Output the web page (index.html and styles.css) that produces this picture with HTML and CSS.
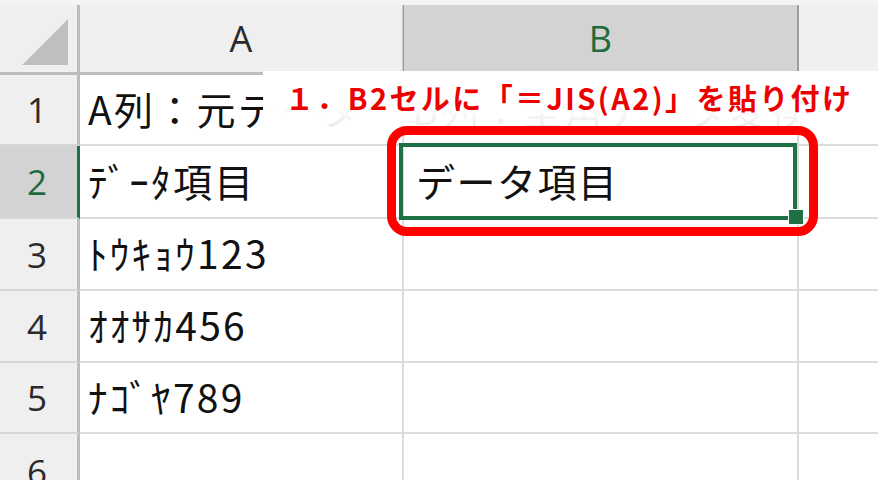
FILE: index.html
```html
<!DOCTYPE html>
<html lang="ja">
<head>
<meta charset="utf-8">
<link rel="stylesheet" href="styles.css">
</head>
<body>
<div class="sheet">
  <div class="grid">
    <div class="strip"></div>
    <div class="edge"></div>

    <div class="corner"><span class="tri"></span></div>
    <div class="colhead">A</div>
    <div class="colhead sel">B</div>
    <div class="colhead c"></div>
    <div class="edge"></div>

    <div class="rowhead">1</div>
    <div class="cell">A列：元データ</div>
    <div class="cell">B列：全角データ変換後</div>
    <div class="cell c"></div>
    <div class="edge"></div>

    <div class="rowhead sel">2</div>
    <div class="cell">ﾃﾞｰﾀ項目</div>
    <div class="cell active">データ項目<span class="handle"></span></div>
    <div class="cell c"></div>
    <div class="edge"></div>

    <div class="rowhead">3</div>
    <div class="cell">ﾄｳｷｮｳ123</div>
    <div class="cell"></div>
    <div class="cell c"></div>
    <div class="edge"></div>

    <div class="rowhead">4</div>
    <div class="cell">ｵｵｻｶ456</div>
    <div class="cell"></div>
    <div class="cell c"></div>
    <div class="edge"></div>

    <div class="rowhead">5</div>
    <div class="cell">ﾅｺﾞﾔ789</div>
    <div class="cell"></div>
    <div class="cell c"></div>
    <div class="edge"></div>

    <div class="rowhead last">6</div>
    <div class="cell"></div>
    <div class="cell"></div>
    <div class="cell c"></div>
    <div class="edge"></div>
  </div>
  <div class="callout">１．B2セルに「＝JIS(A2)」を貼り付け</div>
  <div class="redbox"></div>
</div>
</body>
</html>
```

FILE: styles.css
```css
html, body {
  margin: 0;
  padding: 0;
  background: #fff;
  overflow: hidden;
}

.sheet {
  position: relative;
  width: 886px;
  height: 480px;
  overflow: hidden;
}

.grid {
  display: grid;
  grid-template-columns: 80px 324px 395px 79px 8px;
  grid-template-rows: 5px 70px 71px 73px 72px 72px 71px 60px;
}

.strip {
  grid-column: 1 / 5;
  background: #f4f4f4;
}

.edge {
  background: #fff;
}

.corner {
  background: #efefef;
  border-right: 3px solid #bdbdbd;
  border-bottom: 3px solid #bdbdbd;
  box-sizing: border-box;
  position: relative;
}

.tri {
  position: absolute;
  left: 22px;
  top: 14px;
  width: 0;
  height: 0;
  border-left: 46px solid transparent;
  border-bottom: 46px solid #bfbfbf;
}

.colhead {
  background: #efefef;
  border-right: 2px solid #c8c8c8;
  border-bottom: 3px solid #bdbdbd;
  box-sizing: border-box;
  display: flex;
  align-items: center;
  justify-content: center;
  font-family: "Open Sans", "Noto Sans", sans-serif;
  font-size: 36px;
  color: #2a2a2a;
}

.colhead.sel {
  background: #d3d3d3;
  color: #1e6b40;
  border-left: 1px solid #9e9e9e;
  border-right: 2px solid #9e9e9e;
  margin-left: -1px;
}

.colhead.c {
  border-right: none;
  background: #f0f0f0;
}

.rowhead {
  background: #efefef;
  border-right: 3px solid #bdbdbd;
  border-bottom: 2px solid #d6d6d6;
  box-sizing: border-box;
  display: flex;
  align-items: center;
  justify-content: center;
  padding-right: 3px;
  font-family: "Open Sans", "Noto Sans", sans-serif;
  font-size: 35px;
  color: #2a2a2a;
}

.rowhead.sel {
  background: #d3d3d3;
  color: #1e6b40;
  border-right-color: #1e7145;
}

.rowhead.last {
  align-items: flex-start;
  padding-top: 14px;
}

.cell {
  border-right: 2px solid #dcdcdc;
  border-bottom: 2px solid #dcdcdc;
  box-sizing: border-box;
  display: flex;
  align-items: center;
  padding-left: 8px;
  padding-bottom: 4px;
  white-space: nowrap;
  overflow: hidden;
  font-family: "Noto Sans CJK JP", sans-serif;
  font-size: 39px;
  letter-spacing: 2.3px;
  color: #111;
}

.cell.c {
  border-right: none;
}

.cell.active {
  position: relative;
  overflow: visible;
  padding-left: 12px;
  letter-spacing: 1.5px;
}

.cell.active::after {
  content: "";
  position: absolute;
  left: -5px;
  top: -3px;
  right: 0;
  bottom: -3px;
  border: 4px solid #1e7145;
  pointer-events: none;
}

.handle {
  position: absolute;
  right: -7px;
  bottom: -8px;
  width: 14px;
  height: 14px;
  background: #1e7145;
  border: 1px solid #fff;
  z-index: 2;
}

.callout {
  position: absolute;
  left: 263px;
  top: 71px;
  width: 617px;
  height: 58px;
  background: linear-gradient(to bottom, #fff 0, #fff 62%, rgba(255,255,255,0.9) 100%);
  box-sizing: border-box;
  padding-left: 22px;
  padding-top: 6px;
  font-family: "Noto Sans CJK JP", sans-serif;
  font-weight: 700;
  font-size: 29px;
  letter-spacing: 2.4px;
  color: #ec0000;
  white-space: nowrap;
  line-height: 40px;
}

.redbox {
  position: absolute;
  left: 387px;
  top: 126px;
  width: 431px;
  height: 110px;
  border: 9px solid #ff0000;
  border-radius: 20px;
  box-sizing: border-box;
}
```
